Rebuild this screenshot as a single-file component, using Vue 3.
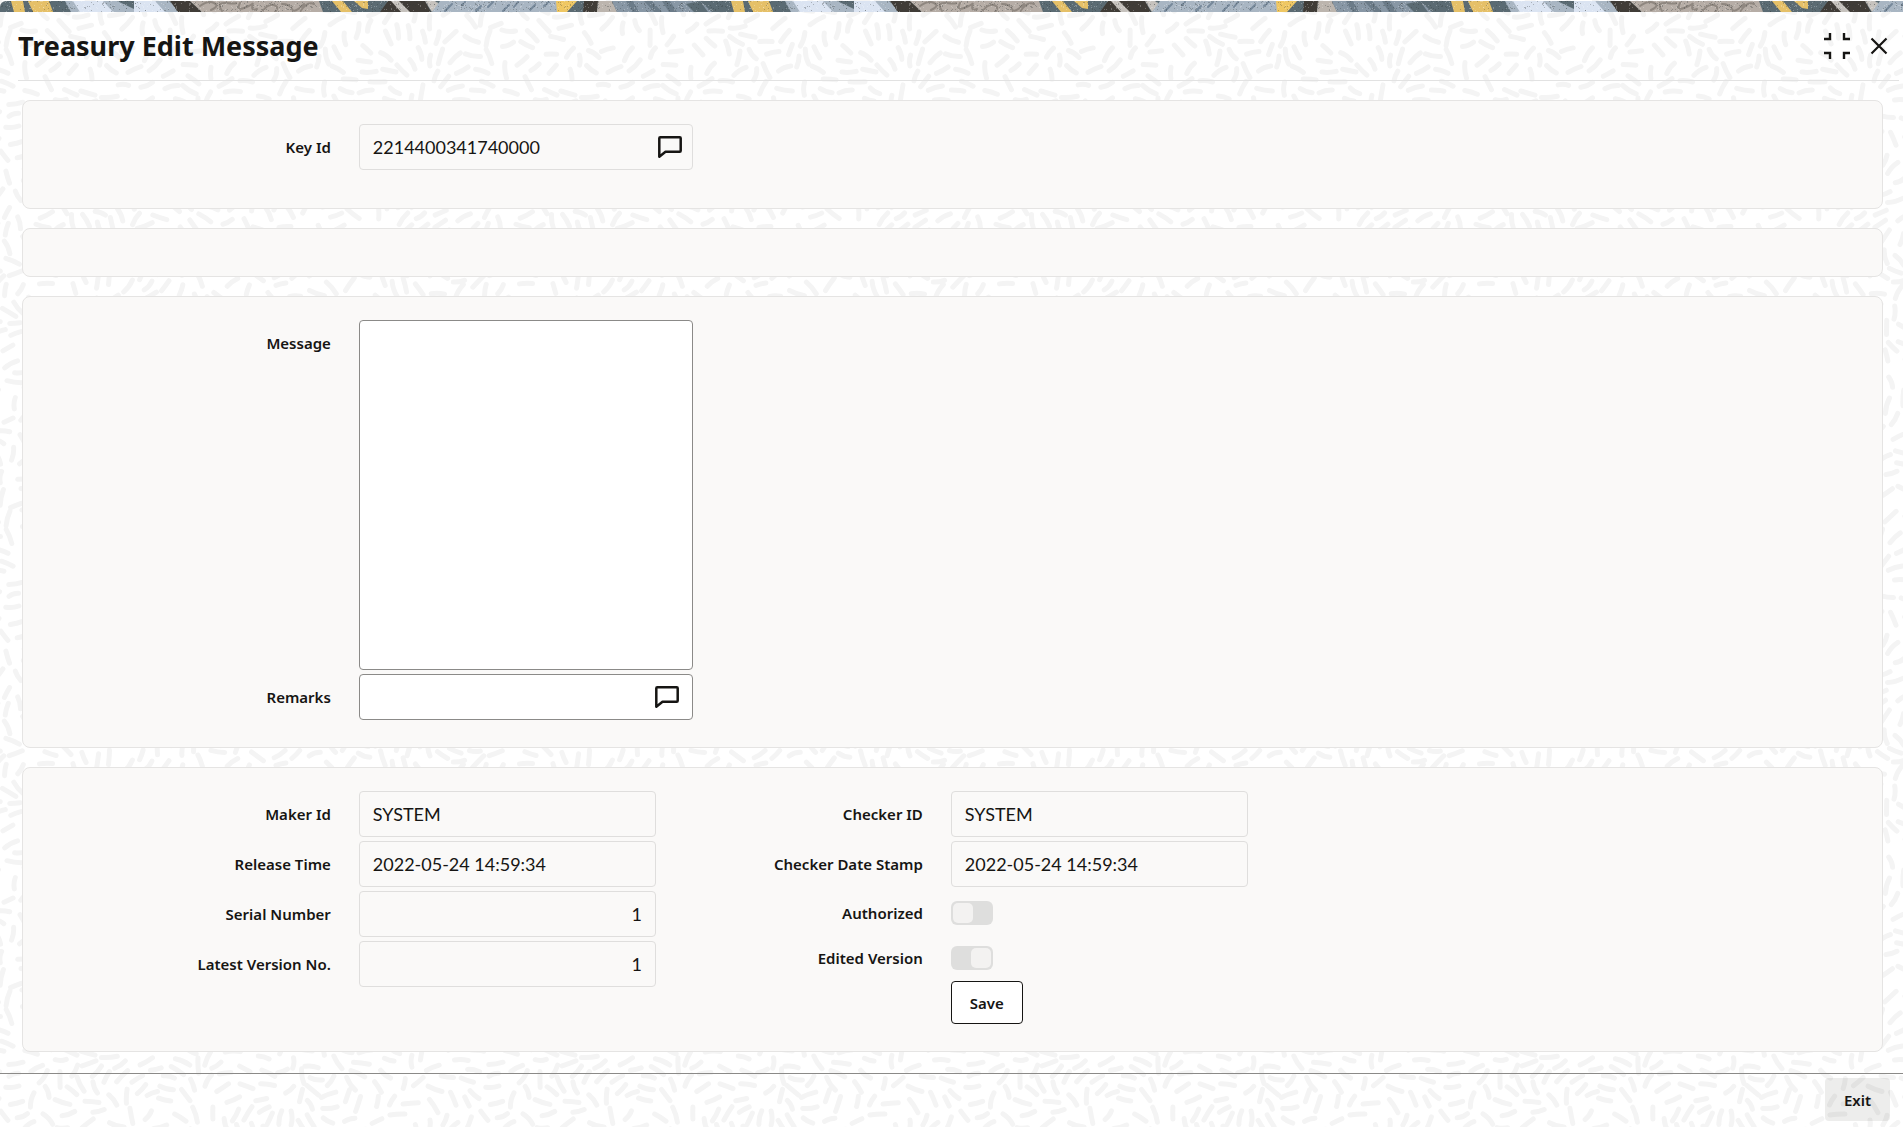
<template>
  <div class="screen">
    <svg class="backdrop" aria-hidden="true">
      <defs>
        <pattern id="doodle" :width="TILE" :height="TILE" patternUnits="userSpaceOnUse">
          <path :d="doodlePath" fill="none" stroke="#f4f4f4" stroke-width="5" stroke-linecap="round" />
        </pattern>
      </defs>
      <rect width="100%" height="100%" fill="url(#doodle)" />
    </svg>

    <svg class="strip" aria-hidden="true">
      <defs>
        <pattern id="ribbon" width="720" height="11" patternUnits="userSpaceOnUse">
          <rect width="720" height="11" fill="#5b6b73" />
          <polygon
            v-for="(shape, i) in ribbonShapes"
            :key="i"
            :points="shape.points"
            :fill="shape.fill"
          />
          <path :d="squiggles" fill="none" stroke="#8f8780" stroke-width="2" stroke-linecap="round" />
          <path :d="slashes" fill="none" stroke="#76889a" stroke-width="2" stroke-linecap="round" />
          <path :d="darkSpecks" stroke="#33383a" stroke-opacity="0.3" />
          <path :d="lightSpecks" stroke="#ffffff" stroke-opacity="0.25" />
        </pattern>
      </defs>
      <rect width="100%" height="11" fill="url(#ribbon)" />
    </svg>

    <header class="header">
      <h1 class="title">Treasury Edit Message</h1>
      <div class="window-actions">
        <button type="button" class="icon-button" aria-label="Restore size">
          <svg width="26" height="26" viewBox="0 0 26 26" fill="none" stroke="#161513" stroke-width="2.4">
            <path d="M0 6h6V0M20 0v6h6M0 20h6v6M26 20h-6v6" />
          </svg>
        </button>
        <button type="button" class="icon-button" aria-label="Close" @click="closed = true">
          <svg width="18" height="18" viewBox="0 0 18 18" fill="none" stroke="#161513" stroke-width="2.2">
            <path d="M1.500 1.500l15 15M16.500 1.500l-15 15" />
          </svg>
        </button>
      </div>
    </header>

    <main class="content">
      <section class="panel panel-key">
        <div class="row">
          <label class="label" for="key-id">Key Id</label>
          <div class="field wide readonly">
            <input id="key-id" type="text" :value="form.keyId" readonly />
            <button type="button" class="icon-button" aria-label="Show Key Id">
              <svg width="24" height="22" viewBox="0 0 24 22" fill="none" stroke="#161513" stroke-width="2.5" stroke-linejoin="round">
                <path d="M2.300 1.300h19.400q1 0 1 1v12.400q0 1-1 1H7.500l-6.200 5V2.300q0-1 1-1z" />
              </svg>
            </button>
          </div>
        </div>
      </section>

      <section class="panel panel-empty"></section>

      <section class="panel">
        <div class="column">
          <div class="row">
            <label class="label" for="message">Message</label>
            <textarea id="message" v-model="form.message" class="message wide"></textarea>
          </div>
          <div class="row">
            <label class="label" for="remarks">Remarks</label>
            <div class="field wide">
              <input id="remarks" v-model="form.remarks" type="text" />
              <button type="button" class="icon-button" aria-label="Show Remarks">
                <svg width="24" height="22" viewBox="0 0 24 22" fill="none" stroke="#161513" stroke-width="2.5" stroke-linejoin="round">
                  <path d="M2.300 1.300h19.400q1 0 1 1v12.400q0 1-1 1H7.500l-6.200 5V2.300q0-1 1-1z" />
                </svg>
              </button>
            </div>
          </div>
        </div>
      </section>

      <section class="panel">
        <div class="column">
          <div v-for="item in makerFields" :key="item.id" class="row">
            <label class="label" :for="item.id">{{ item.label }}</label>
            <div class="field readonly">
              <input :id="item.id" type="text" :class="{ numeric: item.numeric }" :value="item.value" readonly />
            </div>
          </div>
        </div>

        <div class="column">
          <div v-for="item in checkerFields" :key="item.id" class="row">
            <label class="label" :for="item.id">{{ item.label }}</label>
            <div class="field readonly">
              <input :id="item.id" type="text" :value="item.value" readonly />
            </div>
          </div>
          <div class="switches">
            <div v-for="item in switches" :key="item.id" class="row">
              <label class="label" :for="item.id">{{ item.label }}</label>
              <input :id="item.id" type="checkbox" class="switch" :checked="item.on" disabled />
            </div>
            <div class="row">
              <span class="label"></span>
              <button type="button" class="button save">Save</button>
            </div>
          </div>
        </div>
      </section>
    </main>

    <footer class="footer">
      <button type="button" class="button exit" @click="closed = true">Exit</button>
    </footer>
  </div>
</template>

<script setup>
import { reactive, ref } from "vue";

const closed = ref(false);

const form = reactive({
  keyId: "2214400341740000",
  message: "",
  remarks: "",
});

const makerFields = [
  { id: "maker-id", label: "Maker Id", value: "SYSTEM" },
  { id: "release-time", label: "Release Time", value: "2022-05-24 14:59:34" },
  { id: "serial-number", label: "Serial Number", value: "1", numeric: true },
  { id: "latest-version", label: "Latest Version No.", value: "1", numeric: true },
];

const checkerFields = [
  { id: "checker-id", label: "Checker ID", value: "SYSTEM" },
  { id: "checker-date", label: "Checker Date Stamp", value: "2022-05-24 14:59:34" },
];

const switches = [
  { id: "authorized", label: "Authorized", on: false },
  { id: "edited-version", label: "Edited Version", on: true },
];

const ribbonShapes = [
  { fill: "#e5c068", points: "11,0 23,0 25,11 14,11" },
  { fill: "#e5c068", points: "28,0 49,0 53,11 33,11" },
  { fill: "#a9b6c3", points: "65,0 171,0 179,11 71,11" },
  { fill: "#dbe4f2", points: "73,0 103,0 113,11 80,11" },
  { fill: "#5b6b73", points: "117,0 134,0 134,8" },
  { fill: "#dbe4f2", points: "134,0 155,0 165,11 134,11" },
  { fill: "#403c37", points: "170,0 190,0 202,11 178,11" },
  { fill: "#b6ada6", points: "190,0 319,0 323,11 202,11" },
  { fill: "#e5c068", points: "332,0 343,0 352,11 341,11" },
  { fill: "#e5c068", points: "354,0 368,0 368,8 362,7" },
  { fill: "#403c37", points: "388,0 425,0 431,11 380,11" },
  { fill: "#c6c2bd", points: "391,0 399,0 410,11 401,11" },
  { fill: "#c6c2bd", points: "425,0 435,0 440,4 432,11" },
  { fill: "#a9b6c3", points: "440,0 557,0 557,11 432,11" },
  { fill: "#efc763", points: "556,0 577,0 567,11 557,11" },
  { fill: "#403c37", points: "584,0 598,0 597,11 583,11" },
  { fill: "#bcb5ae", points: "598,0 612,0 617,11 597,11" },
  { fill: "#8897a5", points: "612,0 700,0 712,11 617,11" },
  { fill: "#6b7b88", points: "626,0 633,0 639,11 632,11" },
  { fill: "#6b7b88", points: "644,0 652,0 662,11 654,11" },
  { fill: "#6b7b88", points: "662,0 670,0 677,11 669,11" },
  { fill: "#5b6b73", points: "686,3 700,0 708,11 694,11" },
];

const squiggles =
  "M200 5q8-6 14-3t-3 7M222 10q-6-9 4-8t10 0M240 2q-4 8 4 5t9-5q-3 9 4 6M262 11q6-9 12-7t1 7M282 3q8 0 10 5t12-5M300 11q7-11 14-8";

const slashes =
  "M445 10l7-7M462 4l3-3M476 10l5-5M488 6l5-5M503 10l6-6M514 6l4-5M530 9l5-5M544 5l5-4";

// small repeatable generator so that the pattern is the same on every render
function createRandom(seed) {
  let state = seed;
  return () => {
    state = (state * 16807) % 2147483647;
    return state / 2147483647;
  };
}

function buildSpecks(seed, count) {
  const random = createRandom(seed);
  let d = "";
  for (let i = 0; i < count; i++) {
    d += `M${Math.floor(random() * 720)} ${Math.floor(random() * 11) + 0.5}h1`;
  }
  return d;
}

const darkSpecks = buildSpecks(71, 520);
const lightSpecks = buildSpecks(913, 420);

const TILE = 480;

// short curved dashes that follow a swirling direction field
function buildDoodle() {
  const random = createRandom(4217);
  const k = (Math.PI * 2) / TILE;
  const dashes = [];
  let d = "";

  for (let i = 0; i < 22000; i++) {
    const x = random() * TILE;
    const y = random() * TILE;
    const angle =
      1.8 * Math.sin(k * (2 * x + y)) +
      1.6 * Math.cos(k * (2 * y - x)) +
      0.7 * Math.sin(k * (3 * x - 2 * y)) +
      (random() - 0.5) * 0.3;
    const cos = Math.cos(angle);
    const sin = Math.sin(angle);

    const blocked = dashes.some((other) => {
      let dx = x - other.x;
      let dy = y - other.y;
      if (Math.abs(dx) > TILE / 2) dx -= Math.sign(dx) * TILE;
      if (Math.abs(dy) > TILE / 2) dy -= Math.sign(dy) * TILE;
      const along = (dx * cos + dy * sin) / 20;
      const across = (dy * cos - dx * sin) / 10;
      return along * along + across * across < 1;
    });
    if (blocked) continue;

    dashes.push({ x, y });
    const half = 5 + random() * 3;
    const bend = (random() - 0.5) * 4;
    // repeat around the tile so that dashes continue over its edges
    for (const ox of [-TILE, 0, TILE]) {
      for (const oy of [-TILE, 0, TILE]) {
        const cx = x + ox;
        const cy = y + oy;
        if (cx < -12 || cy < -12 || cx > TILE + 12 || cy > TILE + 12) continue;
        const points = [
          cx - half * cos,
          cy - half * sin,
          cx - bend * sin,
          cy + bend * cos,
          cx + half * cos,
          cy + half * sin,
        ].map((n) => n.toFixed(1));
        d += `M${points[0]} ${points[1]}Q${points[2]} ${points[3]} ${points[4]} ${points[5]}`;
      }
    }
  }
  return d;
}

const doodlePath = buildDoodle();
</script>

<style>
body {
  margin: 0;
  background: #ffffff;
}
</style>

<style scoped>
.screen {
  position: relative;
  display: flex;
  flex-direction: column;
  min-height: 100vh;
  box-sizing: border-box;
  padding-top: 1px;
  color: #161513;
  font-family: "Noto Sans", "Open Sans", sans-serif;
  font-size: 15px;
}

.backdrop {
  position: absolute;
  inset: 0;
  z-index: -1;
  width: 100%;
  height: 100%;
}

.strip {
  display: block;
  width: 100%;
  height: 11px;
  border-top-left-radius: 6px;
}

.header {
  display: flex;
  align-items: center;
  justify-content: space-between;
  height: 68px;
  margin: 0 4px 0 18px;
  padding-right: 11px;
  border-bottom: 1px solid #e2e2e2;
}

.title {
  margin: 0;
  font-size: 27px;
  font-weight: 700;
  line-height: 36px;
}

.window-actions {
  display: flex;
  align-items: center;
  gap: 20px;
}

.icon-button {
  display: flex;
  padding: 0;
  border: 0;
  background: transparent;
  cursor: pointer;
}

.content {
  display: flex;
  flex-direction: column;
  flex: 1;
  gap: 19px;
  padding: 19px 20px 19px 22px;
}

.panel {
  display: grid;
  grid-template-columns: repeat(3, 1fr);
  padding: 23px 83px 27px 0;
  border: 1px solid #e5e4e3;
  border-radius: 8px;
  background: #faf9f8;
}

.panel-key {
  padding-bottom: 38px;
}

.panel-key .field {
  padding-right: 10px;
}

.panel-empty {
  padding-bottom: 24px;
}

.column {
  display: flex;
  flex-direction: column;
  gap: 4px;
}

.row {
  display: flex;
  align-items: flex-start;
  gap: 28px;
}

.label {
  flex: 0 0 52%;
  font-weight: 600;
  line-height: 46px;
  text-align: right;
  white-space: nowrap;
}

.field {
  display: flex;
  align-items: center;
  flex: none;
  box-sizing: border-box;
  width: 297px;
  height: 46px;
  padding: 0 13px;
  border: 1px solid #8b8a88;
  border-radius: 4px;
  background: #ffffff;
}

.field.readonly {
  border-color: #dfdedd;
  background: transparent;
}

.wide {
  width: 334px;
}

.field input {
  flex: 1;
  min-width: 0;
  padding: 0;
  border: 0;
  outline: 0;
  background: transparent;
  color: inherit;
  font-family: Lato, "Noto Sans", sans-serif;
  font-size: 18px;
  line-height: 24px;
}

.field input.numeric {
  text-align: right;
}

.message {
  flex: none;
  box-sizing: border-box;
  height: 350px;
  padding: 12px;
  border: 1px solid #8b8a88;
  border-radius: 4px;
  background: #ffffff;
  color: inherit;
  font: inherit;
  resize: none;
}

.switches {
  display: flex;
  flex-direction: column;
}

.switches .label {
  line-height: 45px;
}

.switch {
  display: flex;
  flex: none;
  appearance: none;
  box-sizing: border-box;
  width: 42px;
  height: 24px;
  margin: 10px 0 0;
  padding: 2px;
  border-radius: 6px;
  background: #dededd;
}

.switch::before {
  content: "";
  width: 20px;
  height: 20px;
  border-radius: 5px;
  background: #f3f2f1;
}

.switch:checked {
  justify-content: flex-end;
}

.button {
  height: 43px;
  padding: 0 18px;
  border: 1px solid #161513;
  border-radius: 4px;
  color: inherit;
  font-family: inherit;
  font-size: 15px;
  font-weight: 600;
  cursor: pointer;
}

.save {
  background: #ffffff;
}

.exit {
  border-color: transparent;
  background: rgba(22, 21, 19, 0.08);
}

.footer {
  display: flex;
  justify-content: flex-end;
  padding: 4px 13px 6px;
  border-top: 1px solid #8b8a88;
}
</style>
